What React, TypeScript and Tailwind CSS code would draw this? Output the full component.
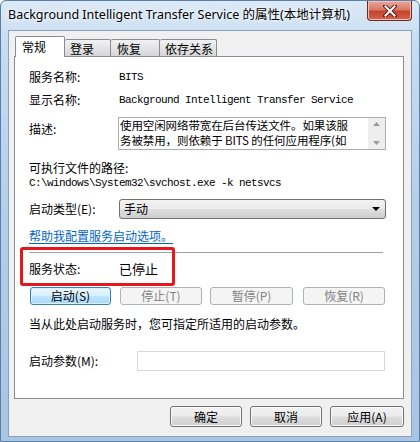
import React from "react";

const btnNormal =
  "h-[21px] rounded-[3px] border border-[#707070] bg-[linear-gradient(#f2f2f2_0%,#ebebeb_48%,#dddddd_52%,#cfcfcf_100%)] text-[12px] leading-[19px] text-black text-center shadow-[inset_0_0_0_1px_#fcfcfc]";

function SmallBtn({ label, kind, w }: { label: string; kind: "default" | "disabled"; w: string }) {
  if (kind === "default") {
    return (
      <div
        className={`${w} h-[18px] rounded-[3px] border border-[#3c7fb1] bg-[linear-gradient(#eaf6fd_0%,#d9f0fc_48%,#bee6fd_52%,#a7d9f5_100%)] text-[12px] leading-[16px] text-black text-center shadow-[inset_0_0_0_1px_#d8f0fb]`}
      >
        {label}
      </div>
    );
  }
  return (
    <div
      className={`${w} h-[18px] rounded-[3px] border border-[#adb2b5] bg-[#f4f4f4] text-[12px] leading-[16px] text-[#838383] text-center`}
    >
      {label}
    </div>
  );
}

export default function App() {
  return (
    <div className="w-[420px] h-[442px] overflow-hidden font-['Noto_Sans_CJK_SC',sans-serif] bg-[linear-gradient(180deg,#dce9f6_0%,#c6dcf1_10%,#b4cde8_50%,#a9c5e4_100%)] flex flex-col rounded-t-[6px] border border-[#5b7ea6]">
      {/* title bar */}
      <div className="h-[29px] flex items-start justify-between">
        <div className="pl-[7px] pt-[4px] text-[12.5px] leading-[20px] text-black font-['Noto_Sans','Noto_Sans_CJK_SC',sans-serif] [text-shadow:0_0_6px_#ffffff,0_0_3px_#ffffff]">
          Background Intelligent Transfer Service 的属性(本地计算机)
        </div>
        <div className="mr-[7px] w-[45px] h-[20px] rounded-b-[4px] border border-t-0 border-[#6b2a22] bg-[linear-gradient(#e9a899_0%,#d97a66_45%,#c7432c_55%,#d4634c_100%)] flex items-center justify-center shadow-[inset_0_0_0_1px_#f2c2b6]">
          <svg width="14" height="12" viewBox="0 0 14 12">
            <path d="M2 1 L12 11 M12 1 L2 11" stroke="#5a2018" strokeWidth="4" strokeLinecap="square" />
            <path d="M2.5 1.5 L11.5 10.5 M11.5 1.5 L2.5 10.5" stroke="#ffffff" strokeWidth="2" strokeLinecap="square" />
          </svg>
        </div>
      </div>

      {/* body */}
      <div className="mx-[7px] h-[407px] bg-[#f0f0f0] border border-[#8aa2c0] flex flex-col pl-[5px] pt-[5px]">
        {/* tabs */}
        <div className="h-[20px] flex items-end pl-[1px] text-[12px] text-black">
          <div className="relative z-10 w-[50px] h-[21px] -mb-px bg-white border border-b-0 border-[#898c95] rounded-t-[2px] pl-[6px] leading-[20px]">
            常规
          </div>
          <div className="w-[46px] h-[17px] border border-b-0 border-l-0 border-[#898c95] rounded-t-[2px] bg-[linear-gradient(#f2f2f2,#d6d6d6)] pl-[5px] leading-[17px]">
            登录
          </div>
          <div className="w-[49px] h-[17px] border border-b-0 border-l-0 border-[#898c95] rounded-t-[2px] bg-[linear-gradient(#f2f2f2,#d6d6d6)] pl-[6px] leading-[17px]">
            恢复
          </div>
          <div className="w-[57px] h-[17px] border border-b-0 border-l-0 border-[#898c95] rounded-t-[2px] bg-[linear-gradient(#f2f2f2,#d6d6d6)] pl-[5px] leading-[17px]">
            依存关系
          </div>
        </div>

        {/* panel */}
        <div className="relative w-[390px] h-[343px] bg-white border border-[#898c95] pl-[14px] pr-[17px] text-[12px] text-black flex flex-col">
          <div className="mt-[12px] h-[16px] flex items-center">
            <div className="w-[90px]">服务名称:</div>
            <div className="font-['Liberation_Mono',monospace] text-[11px] tracking-[-0.6px]">BITS</div>
          </div>
          <div className="mt-[7px] h-[16px] flex items-center">
            <div className="w-[90px]">显示名称:</div>
            <div className="font-['Liberation_Mono',monospace] text-[11px] tracking-[-0.6px]">
              Background Intelligent Transfer Service
            </div>
          </div>
          <div className="mt-[9px] flex">
            <div className="w-[89px] pt-[4px] leading-[16px]">描述:</div>
            <div className="w-[268px] h-[33px] border border-[#abadb3] flex">
              <div className="flex-1 pl-[1px] text-[11.5px] leading-[15px] tracking-[-0.1px] overflow-hidden whitespace-nowrap">
                <div className="h-[15px]">使用空闲网络带宽在后台传送文件。如果该服</div>
                <div className="h-[15px]">务被禁用，则依赖于 BITS 的任何应用程序(如</div>
              </div>
              <div className="w-[17px] bg-[#eeeeee] flex flex-col items-center justify-between py-[4px]">
                <svg width="7" height="4" viewBox="0 0 7 4">
                  <path d="M0 4 L3.5 0 L7 4 Z" fill="#9a9a9a" />
                </svg>
                <svg width="7" height="4" viewBox="0 0 7 4">
                  <path d="M0 0 L3.5 4 L7 0 Z" fill="#9a9a9a" />
                </svg>
              </div>
            </div>
          </div>
          <div className="mt-[10px] h-[16px] flex items-center">可执行文件的路径:</div>
          <div className="h-[14px] flex items-center font-['Liberation_Mono',monospace] text-[11px] tracking-[-0.6px]">
            C:\windows\System32\svchost.exe -k netsvcs
          </div>
          <div className="mt-[9px] flex items-center">
            <div className="w-[90px]">启动类型(E):</div>
            <div className="w-[267px] h-[20px] rounded-[3px] border border-[#707070] bg-[linear-gradient(#f2f2f2_0%,#ebebeb_48%,#dddddd_52%,#cfcfcf_100%)] flex items-center justify-between pl-[4px] pr-[5px]">
              <span>手动</span>
              <svg width="8" height="4" viewBox="0 0 8 4">
                <path d="M0 0 L8 0 L4 4 Z" fill="#000" />
              </svg>
            </div>
          </div>
          <div className="mt-[9px] h-[16px] flex items-center">
            <span className="text-[#0066cc] underline underline-offset-2">帮助我配置服务启动选项。</span>
          </div>
          <div className="mt-[8px] w-[354px] h-[2px] border-t border-[#a0a0a0] border-b border-b-white" />
          <div className="mt-[7px] h-[16px] flex items-center">
            <div className="w-[90px]">服务状态:</div>
            <div className="text-[13px]">已停止</div>
          </div>
          <div className="mt-[10px] flex items-center pl-[1px]">
            <SmallBtn label="启动(S)" kind="default" w="w-[81px]" />
            <div className="w-[9px]" />
            <SmallBtn label="停止(T)" kind="disabled" w="w-[82px]" />
            <div className="w-[8px]" />
            <SmallBtn label="暂停(P)" kind="disabled" w="w-[83px]" />
            <div className="w-[10px]" />
            <SmallBtn label="恢复(R)" kind="disabled" w="w-[82px]" />
          </div>
          <div className="mt-[11px] h-[16px] flex items-center">当从此处启动服务时，您可指定所适用的启动参数。</div>
          <div className="mt-[19px] flex items-center">
            <div className="w-[108px]">启动参数(M):</div>
            <div className="w-[248px] h-[20px] border border-[#d9d9d9] bg-white" />
          </div>

          {/* red annotation box */}
          <div className="absolute left-[5px] top-[190px] w-[155px] h-[39px] border-[3px] border-[#e5161c] rounded-[3px]" />
        </div>

        {/* bottom buttons */}
        <div className="mt-[7px] flex justify-end pr-[7px] gap-[8px]">
          <div className={`w-[72px] ${btnNormal}`}>确定</div>
          <div className={`w-[72px] ${btnNormal}`}>取消</div>
          <div className={`w-[74px] ${btnNormal}`}>应用(A)</div>
        </div>
      </div>
    </div>
  );
}
